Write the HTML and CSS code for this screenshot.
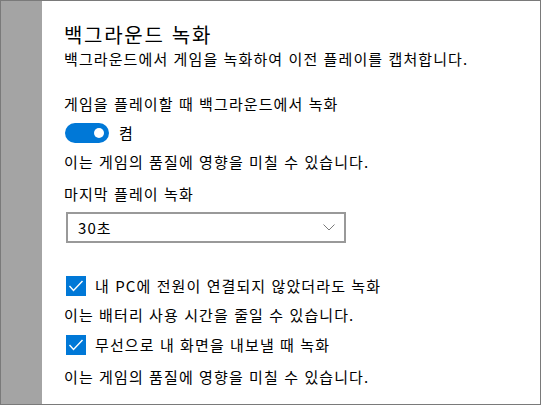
FILE: index.html
```html
<!DOCTYPE html>
<html lang="ko">
<head>
<meta charset="utf-8">
<link rel="stylesheet" href="styles.css">
</head>
<body>
<div class="frame">
  <div class="strip"></div>
  <div class="content">
    <h1 class="title">백그라운드 녹화</h1>
    <p class="text">백그라운드에서 게임을 녹화하여 이전 플레이를 캡처합니다.</p>
    <p class="text label1">게임을 플레이할 때 백그라운드에서 녹화</p>
    <div class="toggle-row">
      <span class="toggle"><span class="knob"></span></span>
      <span class="text">켬</span>
    </div>
    <p class="text note1">이는 게임의 품질에 영향을 미칠 수 있습니다.</p>
    <p class="text label2">마지막 플레이 녹화</p>
    <div class="select">
      <span class="text">30초</span>
      <svg class="chev" width="12" height="7" viewBox="0 0 12 7"><polyline points="0.5,0.5 6,6 11.5,0.5" fill="none" stroke="#7a7a7a" stroke-width="1"/></svg>
    </div>
    <div class="check-row cb1">
      <span class="check"><svg width="20" height="20" viewBox="0 0 20 20"><polyline points="3.5,10 7.5,14.5 16.5,5" fill="none" stroke="#fff" stroke-width="1.4"/></svg></span>
      <span class="text">내 PC에 전원이 연결되지 않았더라도 녹화</span>
    </div>
    <p class="text note2">이는 배터리 사용 시간을 줄일 수 있습니다.</p>
    <div class="check-row cb2">
      <span class="check"><svg width="20" height="20" viewBox="0 0 20 20"><polyline points="3.5,10 7.5,14.5 16.5,5" fill="none" stroke="#fff" stroke-width="1.4"/></svg></span>
      <span class="text">무선으로 내 화면을 내보낼 때 녹화</span>
    </div>
    <p class="text note3">이는 게임의 품질에 영향을 미칠 수 있습니다.</p>
  </div>
</div>
</body>
</html>
```
FILE: styles.css
```css
html, body {
  margin: 0;
  padding: 0;
  background: #fff;
  overflow: hidden;
}
.frame {
  width: 541px;
  height: 405px;
  box-sizing: border-box;
  border: 1px solid #7a7a7a;
  display: flex;
  font-family: "Noto Sans CJK KR", "Noto Sans", sans-serif;
  color: #000;
}
.strip {
  width: 41px;
  background: #a4a4a4;
  flex: none;
}
.content {
  flex: 1;
  padding: 20px 0 0 22px;
  display: flex;
  flex-direction: column;
  align-items: flex-start;
}
.title {
  margin: 0;
  font-size: 20px;
  font-weight: 400;
  line-height: 28px;
  letter-spacing: 1.7px;
}
.text {
  margin: 0;
  font-size: 15px;
  line-height: 20px;
  letter-spacing: 1.1px;
}
.label1 { margin-top: 25px; }
.toggle-row {
  margin-top: 9px;
  display: flex;
  align-items: center;
  gap: 10px;
  margin-left: 1px;
}
.toggle {
  width: 44px;
  height: 20px;
  border-radius: 10px;
  background: #0078d7;
  display: flex;
  align-items: center;
  justify-content: flex-end;
  padding-right: 5px;
  box-sizing: border-box;
}
.knob {
  width: 10px;
  height: 10px;
  border-radius: 50%;
  background: #fff;
}
.note1 { margin-top: 9px; }
.label2 { margin-top: 12px; }
.select {
  margin-top: 8px;
  margin-left: 2px;
  width: 280px;
  height: 31px;
  box-sizing: border-box;
  border: 2px solid #999;
  display: flex;
  align-items: center;
  justify-content: space-between;
  padding: 0 9px 0 10px;
}
.chev { display: block; }
.check-row {
  display: flex;
  align-items: center;
  gap: 9px;
  margin-left: 2px;
}
.cb1 { margin-top: 33px; }
.cb2 { margin-top: 10px; }
.check {
  width: 20px;
  height: 20px;
  background: #0078d7;
  display: block;
}
.check svg { display: block; }
.note2 { margin-top: 9px; }
.note3 { margin-top: 12px; }
```
